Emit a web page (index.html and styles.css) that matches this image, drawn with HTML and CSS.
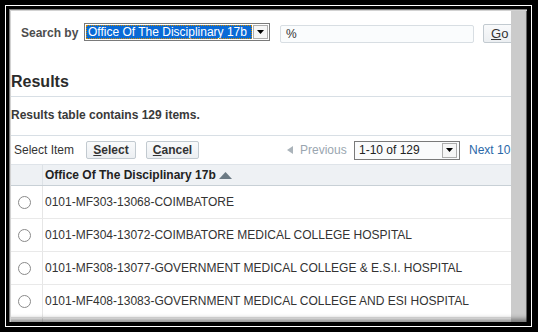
FILE: index.html
```html
<!DOCTYPE html>
<html>
<head>
<meta charset="utf-8">
<link rel="stylesheet" href="styles.css">
</head>
<body>
<div class="outer">
  <div class="ring">
    <div class="win">
      <div class="content">
        <div class="search">
          <span class="lbl">Search by</span>
          <div class="sel sel-search">
            <span class="sel-val">Office Of The Disciplinary 17b</span>
            <span class="sel-btn"><svg width="9" height="5" viewBox="0 0 9 5"><polygon points="1,0 8,0 4.5,4" fill="#000"/></svg></span>
          </div>
          <div class="inp">%</div>
          <span class="btn go"><u>G</u>o</span>
        </div>
        <h2 class="results">Results</h2>
        <p class="count">Results table contains 129 items.</p>
        <div class="toolbar">
          <span class="tlabel">Select Item</span>
          <span class="btn tbtn"><u>S</u>elect</span>
          <span class="btn tbtn"><u>C</u>ancel</span>
          <div class="pager">
            <svg class="prev-ico" width="6" height="8" viewBox="0 0 6 8"><polygon points="6,0 6,8 0,4" fill="#aab3ba"/></svg>
            <span class="prev">Previous</span>
            <div class="sel sel-page">
              <span class="page-val">1-10 of 129</span>
              <span class="sel-btn page-btn"><svg width="9" height="5" viewBox="0 0 9 5"><polygon points="1,0 8,0 4.5,4" fill="#000"/></svg></span>
            </div>
            <span class="next">Next 10</span>
          </div>
        </div>
        <div class="table">
          <div class="row head">
            <div class="c1"></div>
            <div class="c2">Office Of The Disciplinary 17b <svg class="sort" width="13" height="7" viewBox="0 0 13 7"><polygon points="0,7 13,7 6.5,0" fill="#6b7a84"/></svg></div>
          </div>
          <div class="row">
            <div class="c1"><span class="radio"></span></div>
            <div class="c2">0101-MF303-13068-COIMBATORE</div>
          </div>
          <div class="row">
            <div class="c1"><span class="radio"></span></div>
            <div class="c2">0101-MF304-13072-COIMBATORE MEDICAL COLLEGE HOSPITAL</div>
          </div>
          <div class="row">
            <div class="c1"><span class="radio"></span></div>
            <div class="c2">0101-MF308-13077-GOVERNMENT MEDICAL COLLEGE &amp; E.S.I. HOSPITAL</div>
          </div>
          <div class="row">
            <div class="c1"><span class="radio"></span></div>
            <div class="c2">0101-MF408-13083-GOVERNMENT MEDICAL COLLEGE AND ESI HOSPITAL</div>
          </div>
          <div class="row">
            <div class="c1"></div>
            <div class="c2"></div>
          </div>
        </div>
      </div>
      <div class="scroll"></div>
    </div>
  </div>
</div>
</body>
</html>
```
FILE: styles.css
```css
html, body {
  margin: 0;
  padding: 0;
  background: #000;
}
body {
  font-family: "Liberation Sans", Arial, sans-serif;
  font-size: 12px;
  color: #333;
}
.outer {
  width: 538px;
  height: 332px;
  box-sizing: border-box;
  background: #000;
  padding: 5px 6px 5px 5px;
}
.ring {
  height: 100%;
  box-sizing: border-box;
  border: 1px solid #fff;
  background: #000;
  padding: 3px 4px 4px 3px;
}
.win {
  height: 100%;
  display: flex;
  background: #fff;
  position: relative;
  overflow: hidden;
}
.win::after {
  content: "";
  position: absolute;
  inset: 0;
  pointer-events: none;
  box-shadow: inset 1px 1px 0 #7c7c7c, inset 2px 2px 0 #d2d2d2,
    inset 0 -6px 5px -3px rgba(0, 0, 0, 0.45), inset -1px 0 0 #666;
}
.content {
  flex: 1;
  min-width: 0;
  overflow: hidden;
  padding-left: 1px;
}
.scroll {
  width: 16px;
  flex: none;
  background: #cbcbcb;
}

/* search row */
.search {
  display: flex;
  align-items: flex-start;
  margin-top: 14px;
  padding-left: 11px;
  height: 20px;
  white-space: nowrap;
}
.search > * {
  flex: none;
}
.lbl {
  font-weight: bold;
  color: #4d4d4d;
  line-height: 16px;
  margin-top: 2px;
  width: 63px;
}
.sel {
  display: flex;
  box-sizing: border-box;
  border: 1px solid #7a7a7a;
  background: #fff;
}
.sel-search {
  width: 186px;
  height: 18px;
  padding: 1px;
}
.sel-val {
  flex: 1;
  background: #0a6ad6;
  color: #fff;
  line-height: 14px;
  padding-left: 2px;
  outline: 1px dotted #d08a00;
  outline-offset: -1px;
}
.sel-btn {
  width: 15px;
  flex: none;
  margin-left: 1px;
  box-sizing: border-box;
  border: 1px solid #adadad;
  background: #f6f6f6;
  display: flex;
  align-items: center;
  justify-content: center;
}
.inp {
  box-sizing: border-box;
  width: 194px;
  height: 18px;
  margin-left: 10px;
  margin-top: 2px;
  border: 1px solid #d8dee3;
  border-radius: 2px;
  background: #fafcfd;
  line-height: 16px;
  padding-left: 5px;
  color: #333;
}
.btn {
  box-sizing: border-box;
  display: inline-flex;
  align-items: center;
  justify-content: center;
  border: 1px solid #c2cad0;
  border-radius: 2px;
  background: linear-gradient(#f9fafb, #eceff2);
  color: #333;
}
.go {
  margin-left: 9px;
  margin-top: 1px;
  height: 19px;
  width: 34px;
  font-size: 13px;
  justify-content: flex-start;
  padding-left: 7px;
}

/* results */
.results {
  margin: 29px 0 0 0;
  padding: 0 0 4px 1px;
  font-size: 16px;
  line-height: 20px;
  font-weight: bold;
  color: #2b2b2b;
  border-bottom: 1px solid #d8dfe5;
}
.count {
  margin: 10px 0 0 0;
  padding: 0 0 12px 1px;
  line-height: 16px;
  font-weight: bold;
  color: #3a3a3a;
  border-bottom: 1px solid #d8dfe5;
}

/* toolbar */
.toolbar {
  display: flex;
  align-items: center;
  height: 28px;
  padding-left: 4px;
  border-bottom: 1px solid #dfe4e9;
  white-space: nowrap;
}
.toolbar > * {
  flex: none;
}
.tlabel {
  width: 72px;
  color: #333;
}
.tbtn {
  height: 18px;
  font-weight: bold;
  padding: 0 7px;
  margin-right: 10px;
}
.tbtn:nth-child(2) {
  width: 50px;
}
.tbtn:nth-child(3) {
  width: 53px;
}
.pager {
  display: flex;
  align-items: center;
  margin-left: 78px;
}
.pager > * {
  flex: none;
}
.prev-ico {
  margin-right: 7px;
}
.prev {
  color: #9aa6b0;
  width: 54px;
}
.sel-page {
  width: 106px;
  height: 19px;
  padding: 1px;
  background: #fafbfc;
}
.page-val {
  flex: 1;
  line-height: 15px;
  padding-left: 3px;
  color: #222;
}
.page-btn {
  margin-right: 1px;
}
.next {
  margin-left: 9px;
  color: #2a68a8;
}

/* table */
.table {
  width: 520px;
}
.row {
  display: flex;
  height: 32px;
  border-bottom: 1px solid #e9e9e9;
}
.row.head {
  height: 20px;
  background: #eef1f4;
  border-bottom: 1px solid #c8d0d6;
}
.c1 {
  flex: none;
  border-right: 1px solid #e6e6e6;
  display: flex;
  align-items: center;
  box-sizing: border-box;
  width: 33px;
}
.head .c1 {
  border-right-color: #dde2e6;
}
.c2 {
  flex: 1;
  padding-left: 2px;
  line-height: 32px;
  white-space: nowrap;
  color: #333;
}
.head .c2 {
  line-height: 20px;
  font-weight: bold;
  color: #222;
  display: flex;
  align-items: center;
}
.sort {
  margin-left: 3px;
}
.radio {
  width: 13px;
  height: 13px;
  box-sizing: border-box;
  border: 1px solid #8a8a8a;
  border-radius: 50%;
  background: #fff;
  margin-left: 8px;
}
```
